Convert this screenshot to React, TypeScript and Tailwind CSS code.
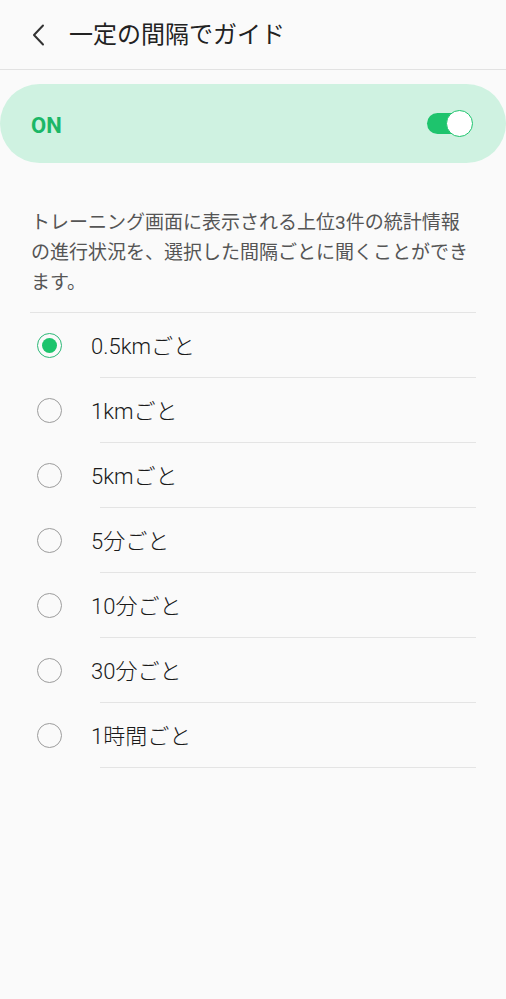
import React, { useState } from 'react';

const options = ['0.5kmごと', '1kmごと', '5kmごと', '5分ごと', '10分ごと', '30分ごと', '1時間ごと'];

const App: React.FC = () => {
  const [selected, setSelected] = useState(0);
  const [on, setOn] = useState(true);

  return (
    <div
      className="min-h-[999px] w-full bg-[#fafafa] text-[#222]"
      style={{ fontFamily: "Roboto, 'Noto Sans CJK JP', sans-serif" }}
    >
      {/* header */}
      <div className="flex h-[70px] items-center border-b border-[#e2e2e2]">
        <button className="ml-[30px] flex h-[24px] w-[16px] items-center justify-center">
          <svg width="14" height="22" viewBox="0 0 14 22" fill="none">
            <path d="M12 1.5 L3 11 L12 20.5" stroke="#333" strokeWidth="2" strokeLinecap="round" strokeLinejoin="round" />
          </svg>
        </button>
        <h1 className="ml-[23px] text-[24px] font-normal leading-none text-[#222]">一定の間隔でガイド</h1>
      </div>

      {/* on card */}
      <div className="mt-[14px] flex h-[79px] items-center justify-between rounded-full bg-[#cff2e1] pl-[31px] pr-[33px]">
        <span className="mt-[3px] text-[22px] font-bold text-[#1bb767]">{on ? 'ON' : 'OFF'}</span>
        <button
          onClick={() => setOn(!on)}
          className="relative h-[27px] w-[46px]"
        >
          <span className={`absolute left-0 top-[3px] h-[21px] w-[42px] rounded-full ${on ? 'bg-[#1ec46d]' : 'bg-[#bbb]'}`} />
          <span
            className={`absolute top-0 h-[27px] w-[27px] rounded-full border-[1.5px] bg-white ${
              on ? 'right-0 border-[#1ec46d]' : 'left-0 border-[#bbb]'
            }`}
          />
        </button>
      </div>

      {/* description */}
      <p className="mx-[31px] mt-[45px] text-[19px] leading-[30px] text-[#555]">
        トレーニング画面に表示される上位3件の統計情報の進行状況を、選択した間隔ごとに聞くことができます。
      </p>

      <div className="mx-[30px] mt-[14px] border-t border-[#e4e4e4]" />

      {/* options */}
      <div>
        {options.map((label, i) => (
          <div key={label} onClick={() => setSelected(i)} className="cursor-pointer">
            <div className="flex h-[64px] items-center">
              <span
                className={`ml-[37px] flex h-[25px] w-[25px] items-center justify-center rounded-full border-[1.5px] ${
                  selected === i ? 'border-[#2cb877]' : 'border-[#9c9c9c]'
                }`}
              >
                {selected === i && <span className="h-[15px] w-[15px] rounded-full bg-[#1ec46d]" />}
              </span>
              <span className="ml-[29px] mt-[2px] text-[22px] font-light text-[#1a1a1a]">{label}</span>
            </div>
            <div className="ml-[100px] mr-[30px] border-t border-[#e4e4e4]" />
          </div>
        ))}
      </div>
    </div>
  );
};

export default App;
